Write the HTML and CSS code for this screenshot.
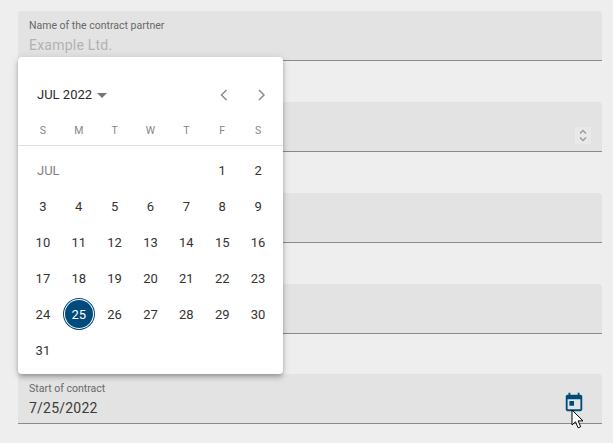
FILE: index.html
```html
<!DOCTYPE html>
<html lang="en">
<head>
<meta charset="utf-8">
<title>Contract</title>
<link rel="stylesheet" href="styles.css">
</head>
<body>
<main class="form">
  <div class="field">
    <label class="label">Name of the contract partner</label>
    <div class="value placeholder">Example Ltd.</div>
  </div>
  <div class="field">
    <div class="spinner">
      <svg width="16" height="17" viewBox="0 0 16 17"><path d="M5 6.500 8 3.500l3 3M5 10.500l3 3 3-3" fill="none" stroke="#9a9a9a" stroke-width="1.300"/></svg>
    </div>
  </div>
  <div class="field"></div>
  <div class="field"></div>
  <div class="field">
    <label class="label">Start of contract</label>
    <div class="value">7/25/2022</div>
    <svg class="cal-icon" width="22" height="22" viewBox="0 0 24 24"><path fill="#004b7c" d="M19 4h-1V2h-2v2H8V2H6v2H5c-1.100 0-2 .9-2 2v14c0 1.100.9 2 2 2h14c1.100 0 2-.9 2-2V6c0-1.100-.9-2-2-2zm0 16H5V9h14v11zM7 11h5v5H7z"/></svg>
  </div>
</main>

<section class="calendar">
  <header class="cal-head">
    <div class="period">JUL 2022 <span class="caret"></span></div>
    <div class="nav">
      <svg width="36" height="24" viewBox="0 0 36 24"><path d="M21.500 7 16.500 12l5 5" fill="none" stroke="#8c8c8c" stroke-width="1.500"/></svg>
      <svg width="36" height="24" viewBox="0 0 36 24"><path d="M18 7l5 5-5 5" fill="none" stroke="#8c8c8c" stroke-width="1.500"/></svg>
    </div>
  </header>
  <div class="weekdays">
    <span>S</span><span>M</span><span>T</span><span>W</span><span>T</span><span>F</span><span>S</span>
  </div>
  <div class="days">
    <span class="month">JUL</span>
    <span>1</span><span>2</span>
    <span>3</span><span>4</span><span>5</span><span>6</span><span>7</span><span>8</span><span>9</span>
    <span>10</span><span>11</span><span>12</span><span>13</span><span>14</span><span>15</span><span>16</span>
    <span>17</span><span>18</span><span>19</span><span>20</span><span>21</span><span>22</span><span>23</span>
    <span>24</span><span class="selected"><b>25</b></span><span>26</span><span>27</span><span>28</span><span>29</span><span>30</span>
    <span>31</span>
  </div>
</section>

<svg class="cursor" width="14" height="20" viewBox="0 0 14 20"><path d="M1 1v15l3.500-3.200 2.600 6 2.600-1.100-2.600-5.800H12z" fill="#fff" stroke="#000" stroke-width="1"/></svg>
</body>
</html>
```
FILE: styles.css
```css
* { box-sizing: border-box; }
html, body { margin: 0; height: 100%; overflow: hidden; }
body { background: #eeeeee; font-family: Roboto, "Liberation Sans", sans-serif; color: #212121; position: relative; }
.form { display: flex; flex-direction: column; gap: 40.75px; padding: 11.45px 11px 0 18px; }
.field { position: relative; height: 50px; background: #e3e3e3; border-radius: 4px 4px 0 0; border-bottom: 1px solid #8a8a8a; padding: 8px 11px 0; }
.label { display: block; font-size: 10.500px; line-height: 13px; color: #686868; }
.value { font-size: 14px; line-height: 20px; margin-top: 3px; letter-spacing: .22px; color: #3a3a3a; }
.placeholder { color: #b2b2b2; }
.spinner { position: absolute; right: 11px; top: 25px; width: 16px; height: 17px; background: #e9e9e9; display: flex; }
.cal-icon { position: absolute; right: 17px; top: 17px; }
.calendar { position: absolute; left: 18px; top: 57px; width: 265px; height: 317px; padding-top: 25px; background: #fff; border-radius: 4px; box-shadow: 0 2px 4px -1px rgba(0,0,0,.2), 0 4px 5px rgba(0,0,0,.14), 0 1px 10px rgba(0,0,0,.12); }
.cal-head { display: flex; justify-content: space-between; align-items: center; height: 24px; padding: 0 6px 0 19px; margin-bottom: 18px; }
.period { font-size: 13px; display: flex; align-items: center; gap: 4px; color: #2a2a2a; }
.caret { width: 0; height: 0; border-left: 5px solid transparent; border-right: 5px solid transparent; border-top: 5px solid #757575; margin-left: 1px; margin-top: 2px; }
.nav { display: flex; position: relative; top: 1px; }
.weekdays { display: grid; grid-template-columns: repeat(7, 1fr); padding: 0 7px; height: 22px; border-bottom: 1px solid #e0e0e0; font-size: 10.500px; color: #858585; text-align: center; line-height: 14px; }
.days { display: grid; grid-template-columns: repeat(7, 1fr); grid-auto-rows: 36px; padding: 6px 7px 0; font-size: 13px; color: #333333; }
.days span { display: flex; align-items: center; justify-content: center; }
.days .month { grid-column: span 5; justify-content: flex-start; padding-left: 12px; color: #808080; font-size: 13px; }
.selected b { display: flex; align-items: center; justify-content: center; width: 28px; height: 28px; border-radius: 50%; background: #004b7c; color: #fff; font-weight: 400; box-shadow: 0 0 0 1px #fff, 0 0 0 2px #004b7c; }
.cursor { position: absolute; left: 571px; top: 409px; }
```
